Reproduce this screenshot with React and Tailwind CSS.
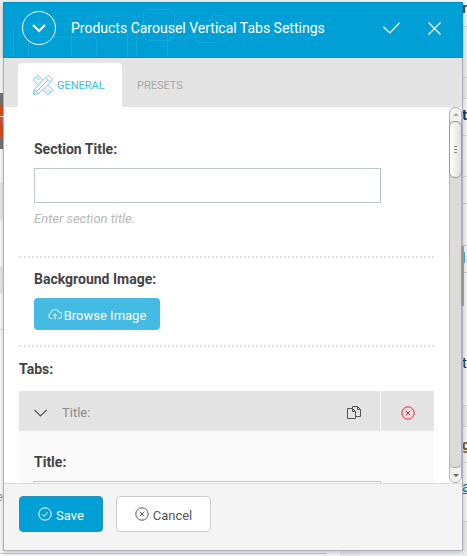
import React from "react";

function CircleIcon({ mark, className }) {
  return (
    <svg viewBox="0 0 14 14" fill="none" stroke="currentColor" className={className} aria-hidden="true">
      <circle cx="7" cy="7" r="6.2" />
      {mark === "check" ? <path d="M4 7.2 6.2 9.4 10 5" /> : <path d="m4.8 4.8 4.4 4.4M9.2 4.8 4.8 9.2" />}
    </svg>
  );
}

function ToolsIcon() {
  return (
    <svg viewBox="0 0 20 20" fill="none" stroke="currentColor" strokeWidth="0.8" className="size-5" aria-hidden="true">
      <path d="M4.4.8.8 4.4Q.2 5 .8 5.600L5 9.800M9.800 5 5.600.8Q5 .2 4.400.8M3 2.400 4.400 3.800M5.200 4.800 6.600 3.400M6 7.600 7.800 5.800" />
      <path d="m15 10.200 4.200 4.200q.6.6 0 1.200l-3.600 3.600q-.6.6-1.200 0L10.200 15M14.200 16.400l1.400-1.400M16 17.400l1.400-1.400M12 14.400l1.800-1.800" />
      <path d="m1.400 14.200-.9 5.300 5.300-.9L19 5.400q.8-.8 0-1.600L16.200 1q-.8-.8-1.600 0ZM1.400 14.200l4.400 4.400M13 2.600 17.400 7M3.600 16.400 15.200 4.800M1 17.200l1.800 1.800" />
    </svg>
  );
}

function CopyIcon() {
  return (
    <svg viewBox="0 0 14 14" fill="none" stroke="currentColor" className="size-3.5" aria-hidden="true">
      <path d="M5.500 2.500h-5v10h8v-7zM5.500 2.500v3h3" />
      <path d="M5.500 2.500v-2h5l3 3v7h-5M10.500.5v3h3" />
    </svg>
  );
}

function HeaderPattern() {
  return (
    <svg viewBox="0 0 250 56" className="absolute left-0 top-0 h-14 w-[250px]" fill="none" stroke="#2fb0dd" strokeOpacity="0.45" aria-hidden="true">
      <path d="M9.500 54V26q0-5 5-5h48q5 0 5 5v28M24.500 54V39q0-5 5-5h58q5 0 5 5v15" />
      <path d="M82.500 34V18q0-5 5-5h40q5 0 5 5M123.500 54V30q0-5 5-5h30q5 0 5 5v24M132.500 18v36" />
      <rect x="139.500" y="6.500" width="31" height="31" rx="5" />
      <rect x="191.500" y="17.500" width="23" height="22" rx="4" />
      <rect x="206.500" y="12.500" width="16" height="18" rx="4" />
    </svg>
  );
}

function FieldLabel({ htmlFor, children }) {
  return (
    <label htmlFor={htmlFor} className="block text-sm font-bold leading-5 text-[#444]">
      {children}
    </label>
  );
}

function Backdrop() {
  return (
    <div className="absolute inset-0 flex justify-between overflow-hidden bg-[#f1f1f1]" aria-hidden="true">
      <div className="w-[340px] bg-white">
        <div className="h-[58px] bg-[#f1f1f1]" />
        <div className="h-[35px]" />
        <div className="h-14 border-y-[12px] border-[#777] bg-[#d9501f] text-xs leading-8 text-white">T</div>
        <div className="h-[35px] border-b border-[#e3e3e3]" />
        <div className="h-9 bg-[#eee]" />
        <div className="h-12 border-b border-[#e3e3e3]" />
        <div className="h-[25px] border-b border-[#e0e0e0] bg-[#eee]" />
        <div className="h-[37px] border-b border-[#e3e3e3]" />
        <div className="h-[224px] w-[327px] border-b border-[#ccc] pt-[155px] text-[13px] leading-6 text-[#999]">
          <span className="-ml-1">e</span>
        </div>
      </div>
      <div className="w-[107px] bg-[#f8f8f8] pl-[102px] text-[15px] leading-5 text-[#23384f]">
        <div className="h-[27px] border-b border-[#ddd] font-bold leading-4 text-[#5a3522]">n</div>
        <div className="h-[51px] border-b border-[#ddd] bg-[#f1f1f1]" />
        <div className="h-[21px] border-b border-[#ddd] bg-[#eee]" />
        <div className="h-[37px] border-b border-[#ddd] pt-1.5 font-bold">t</div>
        <div className="h-[41px] border-b border-[#ddd]" />
        <div className="h-[27px] border-b border-[#ccc]" />
        <div className="h-[42px] border-b border-[#ccc]" />
        <div className="h-[27px] border-b border-[#ccc] pt-0.5 text-[#23789f]">la</div>
        <div className="h-[133px] border-b border-[#ddd] pt-20">t</div>
        <div className="h-[21px] border-b border-[#ddd] bg-[#eee]" />
        <div className="h-9 border-b border-[#ddd] pt-2 font-bold text-[#8a5520]">g</div>
        <div className="h-[59px] border-b border-[#ddd] pt-3.5 text-[#0073aa] underline">a</div>
        <div className="h-[34px] bg-[#eee]" />
      </div>
    </div>
  );
}

function Scrollbar() {
  return (
    <div className="flex w-[13px] shrink-0 flex-col rounded-md border border-[#b5b2af] bg-[#dcdbda]" aria-hidden="true">
      <div className="grid h-[13px] shrink-0 place-items-center rounded-t-md bg-[#f2f1f0]">
        <svg viewBox="0 0 6 3" className="h-[3px] w-1.5 fill-[#aaa]"><path d="M0 3 3 0l3 3z" /></svg>
      </div>
      <div className="-mx-px flex h-[57px] shrink-0 flex-col items-center justify-center gap-0.5 rounded-md border border-[#999] bg-linear-to-r from-white to-[#e2e0de]">
        <i className="h-px w-[3px] bg-[#888]" />
        <i className="h-px w-[3px] bg-[#888]" />
        <i className="h-px w-[3px] bg-[#888]" />
      </div>
      <div className="grow rounded-b-md border-b border-[#aaa]" />
      <div className="grid h-3.5 shrink-0 place-items-center rounded-b-md bg-[#f2f1f0]">
        <svg viewBox="0 0 6 3" className="h-[3px] w-1.5 fill-[#666]"><path d="M0 0h6L3 3z" /></svg>
      </div>
    </div>
  );
}

export default function App() {
  return (
    <div className="relative h-screen overflow-hidden pb-[5px] pl-[3px] pr-1 pt-0.5 font-[Roboto,'Liberation_Sans',sans-serif]">
      <Backdrop />
      <div role="dialog" aria-labelledby="dialog-title" className="relative flex h-full flex-col border border-[#abb2bb] bg-white shadow-[0_2px_6px_rgba(0,0,0,0.25)]">
        <header className="relative -mx-px -mt-px flex h-14 shrink-0 items-center border border-[#0091c6] bg-[#00a0d6] pb-1 pl-[18px] pr-[7px] text-white">
          <HeaderPattern />
          <button aria-label="Collapse" className="relative grid size-[34px] shrink-0 place-items-center rounded-full border border-white">
            <svg viewBox="0 0 14 10" fill="none" stroke="currentColor" strokeWidth="2.2" className="h-2.5 w-3.5" aria-hidden="true"><path d="m1 2 6 6 6-6" /></svg>
          </button>
          <h1 id="dialog-title" className="relative ml-[15px] grow whitespace-nowrap text-sm leading-5">Products Carousel Vertical Tabs Settings</h1>
          <button aria-label="Apply" className="grid w-[43px] shrink-0 place-items-center">
            <svg viewBox="0 0 17 12" fill="none" stroke="currentColor" strokeWidth="1.2" className="h-3 w-[17px]" aria-hidden="true"><path d="m.5 5 6.500 6L16.500.8" /></svg>
          </button>
          <button aria-label="Close" className="grid w-[42px] shrink-0 place-items-center">
            <svg viewBox="0 0 13 13" fill="none" stroke="currentColor" strokeWidth="1.2" className="size-[13px]" aria-hidden="true"><path d="m.5.5 12 12M12.500.5l-12 12" /></svg>
          </button>
        </header>

        <div role="tablist" className="flex h-[49px] shrink-0 bg-[#e4e4e4] pl-3.5 pt-[5px] text-[11px]">
          <button role="tab" aria-selected="true" className="flex w-[104px] items-center gap-1 rounded-t bg-white pl-[15px] text-[#43bbe3]">
            <ToolsIcon />
            <span className="pt-0.5">GENERAL</span>
          </button>
          <button role="tab" aria-selected="false" className="px-[15px] pt-0.5 text-[#a5a5a5]">PRESETS</button>
        </div>

        <div className="flex min-h-0 grow">
          <div className="min-w-0 grow overflow-hidden px-[15px]">
            <section className="border-b-2 border-dotted border-[#e2e2e2] px-[15px] pb-[27px] pt-8">
              <FieldLabel htmlFor="section-title">Section Title:</FieldLabel>
              <input id="section-title" type="text" className="mt-[9px] block h-[35px] w-[347px] max-w-full border border-[#b9c6cf] bg-white px-2 text-[13px]" />
              <p className="mt-1.5 text-[13px] italic leading-5 text-[#b8b8b8]">Enter section title.</p>
            </section>

            <section className="border-b-2 border-dotted border-[#e2e2e2] px-[15px] pb-[15px] pt-[11px]">
              <FieldLabel htmlFor="browse-image">Background Image:</FieldLabel>
              <button id="browse-image" className="mt-[9px] flex h-8 w-[126px] items-center justify-center gap-0.5 rounded-sm bg-[#43bbe3] pt-1 text-[13px] text-white">
                <svg viewBox="0 0 14 12" fill="none" stroke="currentColor" strokeWidth="0.900" className="-mt-1 h-3 w-3.5 shrink-0" aria-hidden="true">
                  <path d="M4.500 10.500H3.200a2.700 2.700 0 0 1-.4-5.300A4.100 4.100 0 0 1 10.700 4a3.200 3.200 0 0 1 .3 6.500H9.500M7 11.500V6M5 7.800l2-2 2 2" />
                </svg>
                Browse Image
              </button>
            </section>

            <section className="pt-3">
              <h2 className="text-sm font-bold leading-5 text-[#444]">Tabs:</h2>
              <div className="mt-3 bg-[#fafafa]">
                <div className="flex h-10 bg-[#e4e4e4]">
                  <button className="flex grow items-center gap-[15px] pl-[15px] pt-1 text-[13px] text-[#8a8a8a]">
                    <svg viewBox="0 0 13 8" fill="none" stroke="#555" strokeWidth="1.2" className="h-2 w-[13px]" aria-hidden="true"><path d="m.5 1 6 6 6-6" /></svg>
                    Title:
                  </button>
                  <button aria-label="Duplicate" className="grid w-[53px] place-items-center pt-1 text-[#555]"><CopyIcon /></button>
                  <button aria-label="Delete" className="grid w-[54px] place-items-center border-l border-[#f7f7f7] pt-1 text-[#f5222d]">
                    <CircleIcon mark="cross" className="size-3.5" />
                  </button>
                </div>
                <div className="px-[15px] pb-5 pt-[21px]">
                  <FieldLabel htmlFor="tab-title">Title:</FieldLabel>
                  <input id="tab-title" type="text" className="mt-[9px] block h-[35px] w-[347px] max-w-full border border-[#b9c6cf] bg-white px-2 text-[13px]" />
                </div>
              </div>
            </section>
          </div>
          <Scrollbar />
        </div>

        <footer className="flex shrink-0 gap-[13px] border-t border-[#dcdcdc] bg-[#f4f4f4] px-[15px] pb-[18px] pt-3 text-[13px]">
          <button className="flex h-9 w-[84px] items-center justify-center gap-1 rounded-sm border border-[#2790b8] bg-[#00a0d6] pt-1 text-white">
            <CircleIcon mark="check" className="-mt-1 size-3.5" />
            Save
          </button>
          <button className="flex h-9 w-[95px] items-center justify-center gap-1 rounded-sm border border-[#ccc] bg-white pt-1 text-[#555]">
            <CircleIcon mark="cross" className="-mt-1 size-3.5" />
            Cancel
          </button>
        </footer>
      </div>
      <div className="absolute right-[3px] top-[246px] h-[60px] w-[3px] bg-[#999]" />
    </div>
  );
}
